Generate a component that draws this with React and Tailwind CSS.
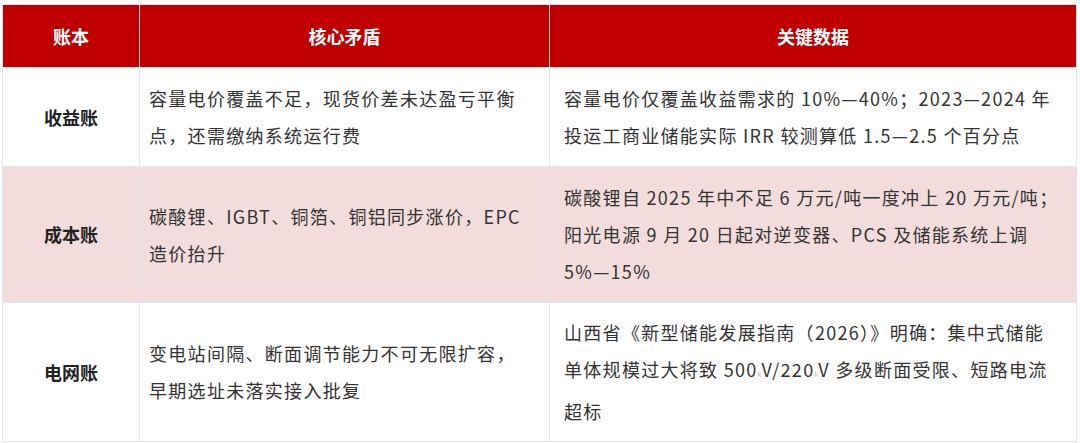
import React from 'react';

const rows = [
  {
    name: '收益账',
    issue: '容量电价覆盖不足，现货价差未达盈亏平衡点，还需缴纳系统运行费',
    data: <>容量电价仅覆盖收益需求的 10%—40%；2023—2024 年投运工商业储能实际 IRR 较测算低 1.5—2.5 个百分点</>,
    bg: 'bg-white',
    pad: 'py-[12px] pr-[20px]',
  },
  {
    name: '成本账',
    issue: '碳酸锂、IGBT、铜箔、铜铝同步涨价，EPC 造价抬升',
    data: (
      <>
        碳酸锂自 2025 年中不足 6 万元/吨一度冲上 20 万元/吨；阳光电源 9 月 20 日起对逆变器、PCS 及储能系统上调{' '}
        <span className="whitespace-nowrap">5%—15%</span>
      </>
    ),
    bg: 'bg-[#f2dcdc]',
    pad: 'py-[12px] pr-[4px]',
  },
  {
    name: '电网账',
    issue: '变电站间隔、断面调节能力不可无限扩容，早期选址未落实接入批复',
    data: (
      <>
        山西省《新型储能发展指南（2026）》明确：集中式储能单体规模过大将致 500<span className="text-[7px] tracking-normal text-[#bbb]">k</span>V/220<span className="text-[7px] tracking-normal text-[#bbb]">k</span>V 多级断面受限、短路电流超标
      </>
    ),
    bg: 'bg-white',
    pad: 'py-[11px] pr-[20px]',
  },
];

export default function App() {
  return (
    <div className="h-[443px] w-[1080px] bg-white pl-[2px] pt-[4px] font-['Noto_Sans_CJK_SC',sans-serif] text-[#333]">
      <table className="w-[1074px] table-fixed border-collapse">
        <colgroup>
          <col className="w-[137px]" />
          <col className="w-[410px]" />
          <col className="w-[527px]" />
        </colgroup>
        <thead>
          <tr className="bg-[#c00000] text-white">
            {['账本', '核心矛盾', '关键数据'].map((h) => (
              <th key={h} className="h-[63px] border border-[#e4e2f0] text-center text-[18px] font-bold">
                {h}
              </th>
            ))}
          </tr>
        </thead>
        <tbody>
          {rows.map((r) => (
            <tr key={r.name} className={r.bg}>
              <td className="border border-[#e4e2f0] text-center text-[18px] font-bold text-[#222]">{r.name}</td>
              <td className={`border border-[#e4e2f0] pl-[9px] text-[18px] leading-[37px] tracking-[1.3px] ${r.pad}`}>
                {r.issue}
              </td>
              <td className={`border border-[#e4e2f0] pl-[14px] text-[18px] leading-[37px] tracking-[1.3px] ${r.pad}`}>
                {r.data}
              </td>
            </tr>
          ))}
        </tbody>
      </table>
    </div>
  );
}
